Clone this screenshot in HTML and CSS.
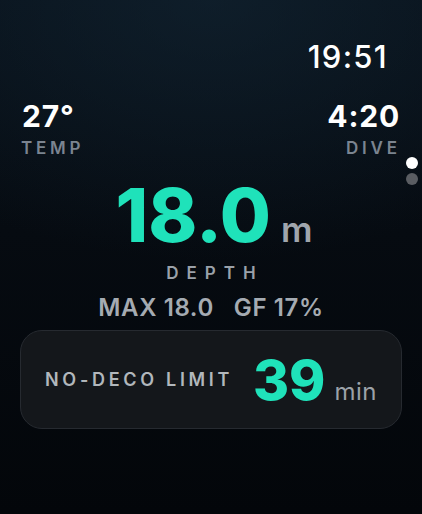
FILE: index.html
```html
<!DOCTYPE html>
<html>
<head>
<meta charset="utf-8">
<link rel="stylesheet" href="styles.css">
</head>
<body>
<div class="screen">
  <div class="clock">19:51</div>
  <div class="stats">
    <div class="stat">
      <div class="stat-value">27°</div>
      <div class="stat-label">TEMP</div>
    </div>
    <div class="stat stat-right">
      <div class="stat-value">4:20</div>
      <div class="stat-label">DIVE</div>
    </div>
  </div>
  <div class="depth">
    <span class="depth-value">18.0</span><span class="depth-unit">m</span>
  </div>
  <div class="depth-label">DEPTH</div>
  <div class="depth-sub">MAX 18.0&nbsp;&nbsp; GF 17%</div>
  <div class="card">
    <div class="card-label">NO-DECO LIMIT</div>
    <div class="card-value"><span class="ndl">39</span><span class="ndl-unit">min</span></div>
  </div>
  <div class="pager">
    <span class="dot dot-active"></span>
    <span class="dot"></span>
  </div>
</div>
</body>
</html>
```
FILE: styles.css
```css
html, body {
  margin: 0;
  padding: 0;
}
body {
  width: 422px;
  height: 514px;
  overflow: hidden;
  background: #04070b;
  font-family: Inter, "Noto Sans", sans-serif;
}
.screen {
  position: relative;
  width: 422px;
  height: 514px;
  box-sizing: border-box;
  padding: 41px 20px 0 20px;
  display: flex;
  flex-direction: column;
  background:
    radial-gradient(ellipse 420px 260px at 50% 0%, rgba(20, 40, 55, 0.55), rgba(10, 20, 30, 0) 100%),
    linear-gradient(180deg, #08111a 0%, #060b11 45%, #03060a 100%);
}
.clock {
  align-self: flex-end;
  margin-right: 14px;
  color: #ffffff;
  font-size: 31px;
  line-height: 31px;
  font-weight: 500;
  letter-spacing: 1.3px;
}
.stats {
  display: flex;
  justify-content: space-between;
  margin: 29px 2px 0 2px;
}
.stat {
  display: flex;
  flex-direction: column;
  gap: 9px;
}
.stat-right {
  align-items: flex-end;
}
.stat-value {
  color: #ffffff;
  font-size: 30px;
  line-height: 30px;
  font-weight: 700;
  letter-spacing: 0.8px;
}
.stat-label {
  color: #7b8490;
  font-size: 17px;
  line-height: 17px;
  font-weight: 600;
  letter-spacing: 3.8px;
  margin-left: -1px;
}
.stat-right .stat-label {
  margin-right: -0.8px;
}
.depth {
  display: flex;
  justify-content: center;
  align-items: baseline;
  gap: 10px;
  margin-top: 22px;
  padding-left: 6px;
}
.depth-value {
  color: #1fe2ba;
  font-size: 74px;
  line-height: 73px;
  font-weight: 800;
  letter-spacing: 0;
}
.depth-unit {
  color: #a0a6ad;
  font-size: 35px;
  font-weight: 600;
}
.depth-label {
  text-align: center;
  color: #9aa1a9;
  font-size: 17px;
  line-height: 17px;
  font-weight: 600;
  letter-spacing: 8px;
  margin-top: 13px;
  padding-left: 8px;
}
.depth-sub {
  text-align: center;
  color: #a5abb2;
  font-size: 24px;
  line-height: 24px;
  font-weight: 600;
  letter-spacing: 0.6px;
  margin-top: 14px;
}
.card {
  margin-top: 10px;
  height: 99px;
  box-sizing: border-box;
  border: 1.5px solid #262a30;
  border-radius: 22px;
  background: #14171b;
  display: flex;
  align-items: center;
  justify-content: space-between;
  padding: 0 24px 0 24px;
}
.card-label {
  color: #b2b7bc;
  font-size: 18px;
  font-weight: 600;
  letter-spacing: 3.7px;
}
.card-value {
  display: flex;
  align-items: baseline;
  gap: 9px;
}
.ndl {
  color: #1fe2ba;
  font-size: 55px;
  line-height: 56px;
  font-weight: 800;
  letter-spacing: 0;
}
.ndl-unit {
  color: #9ca2a8;
  font-size: 24px;
  font-weight: 400;
  letter-spacing: 0.5px;
}
.pager {
  position: absolute;
  right: 4px;
  top: 157px;
  display: flex;
  flex-direction: column;
  gap: 4px;
}
.dot {
  width: 12px;
  height: 12px;
  border-radius: 50%;
  background: #5a5d62;
}
.dot-active {
  background: #ffffff;
}
```
